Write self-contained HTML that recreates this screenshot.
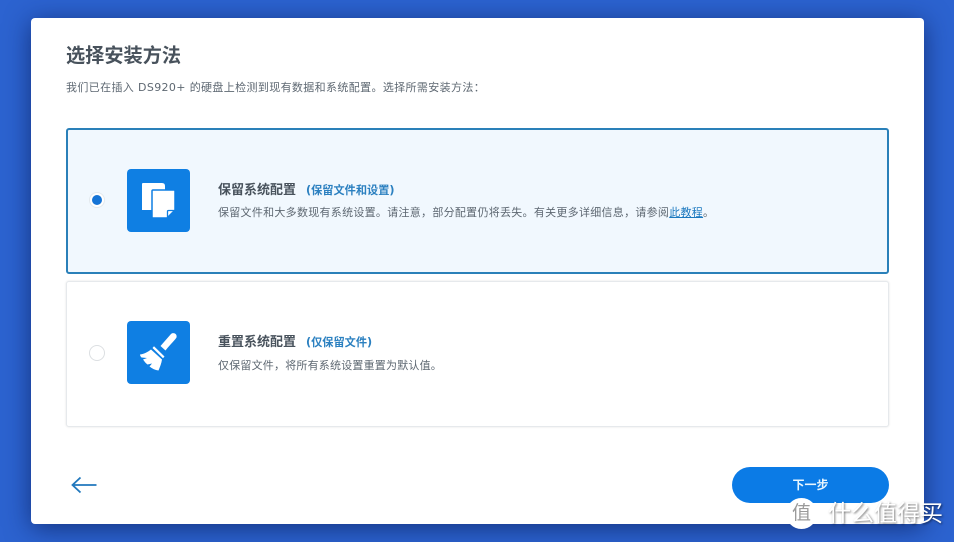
<!DOCTYPE html>
<html lang="zh">
<head>
<meta charset="utf-8">
<style>
html,body{margin:0;padding:0}
body{width:954px;height:542px;overflow:hidden;position:relative;background:#2c63d0;font-family:"DejaVu Sans","Noto Sans CJK SC",sans-serif;}
.abs{position:absolute;white-space:nowrap}
#panel{position:absolute;left:31px;top:18px;width:893px;height:506px;background:#fff;border-radius:4px;box-shadow:0 4px 26px rgba(10,30,90,.7)}
.card{position:absolute;left:66px;width:823px;box-sizing:border-box;border-radius:3px}
#c1{top:128px;height:146px;background:#f1f8fe;border:2px solid #2a80b9}
#c2{top:281px;height:146px;background:#fff;border:1px solid #e6e9ec;box-shadow:0 0 2px rgba(0,0,0,.12)}
.tile{position:absolute;left:127px;width:63px;height:63px;background:#0f7fe3;border-radius:4px}
.t{font-size:13px;font-weight:700;color:#48525c;line-height:16px}
.b{font-size:11.200px;font-weight:700;color:#2b80c0;line-height:16px}
.d{font-size:11px;color:#5e6872;line-height:16px;letter-spacing:.28px}
</style>
</head>
<body>
<div id="panel"></div>
<div class="abs" style="left:66px;top:43px;font-size:19.200px;font-weight:700;color:#48525c;line-height:26px">选择安装方法</div>
<div class="abs d" style="left:66px;top:80px;letter-spacing:.36px">我们已在插入 DS920+ 的硬盘上检测到现有数据和系统配置。选择所需安装方法：</div>

<div class="card" id="c1"></div>
<div class="abs" style="left:89px;top:192px;width:14px;height:14px;border:1px solid #e3e9ee;border-radius:50%;background:#fff"></div>
<div class="abs" style="left:92px;top:195px;width:10px;height:10px;background:#1574d6;border-radius:50%"></div>
<div class="tile" style="top:169px"></div>
<svg class="abs" style="left:127px;top:169px" width="63" height="63" viewBox="0 0 63 63">
<path d="M16 14H35Q38 14 38 17V41H15V15Q15 14 16 14Z" fill="#fff"/>
<path d="M26 21H47Q48 21 48 22V41L40 49H26Q25 49 25 48V22Q25 21 26 21Z" fill="#fff" stroke="#0f7fe3" stroke-width="1.500"/>
<path d="M40.500 48.500V42.500Q40.500 41.500 41.500 41.500H47.500" fill="none" stroke="#0f7fe3" stroke-width="1.300"/>
</svg>
<div class="abs t" style="left:218px;top:183px">保留系统配置</div>
<div class="abs b" style="left:306px;top:183px">(保留文件和设置)</div>
<div class="abs d" style="left:218px;top:205px">保留文件和大多数现有系统设置。请注意，部分配置仍将丢失。有关更多详细信息，请参阅<span style="color:#1b78bf;text-decoration:underline">此教程</span>。</div>

<div class="card" id="c2"></div>
<div class="abs" style="left:89px;top:345px;width:14px;height:14px;border:1px solid #dcdfe2;border-radius:50%;background:#fff"></div>
<div class="tile" style="top:321px"></div>
<svg class="abs" style="left:127px;top:321px" width="63" height="63" viewBox="0 0 63 63">
<path d="M33.500 25L44 13C46 11 50.500 12.500 49.500 16.500C48 19 44 22.500 38.500 29.500Z" fill="#fff"/>
<path d="M25.500 27L27 25.300L37.500 35.500L36 37.200Z" fill="#fff"/>
<path d="M24 28.500L35 38.500C34.500 42 33 46 31.500 49.500C28 49 25 47.500 22.500 45.500L25 42.500L20.500 43.500C18.500 42 17.500 40.500 16 38.500L20 37L14.500 36.500C13.500 35.500 13 34.500 13 33.500C17 33 21 31 24 28.500Z" fill="#fff"/>
</svg>
<div class="abs t" style="left:218px;top:335px">重置系统配置</div>
<div class="abs b" style="left:306px;top:335px">(仅保留文件)</div>
<div class="abs d" style="left:218px;top:358px;letter-spacing:.2px">仅保留文件，将所有系统设置重置为默认值。</div>

<svg class="abs" style="left:70px;top:475px" width="28" height="20" viewBox="0 0 28 20">
<path d="M2.500 10H26.500M10.500 2.500L2.500 10L10.500 17.500" fill="none" stroke="#2178bd" stroke-width="1.800"/>
</svg>

<div class="abs" style="left:732px;top:467px;width:157px;height:36px;border-radius:18px;background:#0b7be6;color:#e8f6ff;font-size:12px;font-weight:700;line-height:36px;text-align:center">下一步</div>

<div class="abs" style="left:786px;top:498px;width:31px;height:31px;border-radius:50%;background:#fff;color:#9a9a9a;font-size:19px;line-height:31px;text-align:center">值</div>
<div class="abs" style="left:828px;top:499px;font-size:23px;line-height:30px;color:#fff;text-shadow:1px 1px 2px rgba(0,0,0,.55)">什么值得买</div>
</body>
</html>
